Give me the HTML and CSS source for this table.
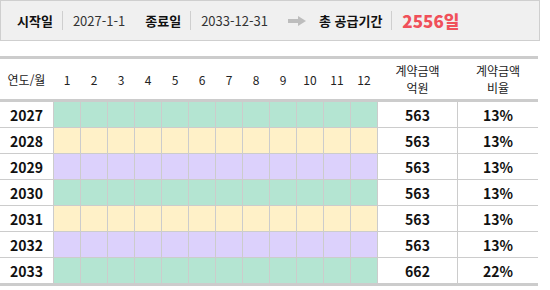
FILE: index.html
```html
<!DOCTYPE html>
<html lang="ko">
<head>
<meta charset="utf-8">
<link rel="stylesheet" href="styles.css">
</head>
<body>
<div class="summary">
  <span class="label">시작일</span><span class="sep"></span><span class="value">2027-1-1</span>
  <span class="label gap">종료일</span><span class="sep"></span><span class="value">2033-12-31</span>
  <svg class="arrow" width="18" height="10" viewBox="0 0 18 10"><rect x="0" y="3" width="11" height="4" fill="#bdbdbd"/><polygon points="10,0 18,5 10,10" fill="#bdbdbd"/></svg>
  <span class="label">총 공급기간</span><span class="sep"></span><span class="total">2556일</span>
</div>
<div class="table">
  <div class="thead">
    <div class="th">연도/월</div>
    <div class="th">1</div><div class="th">2</div><div class="th">3</div><div class="th">4</div>
    <div class="th">5</div><div class="th">6</div><div class="th">7</div><div class="th">8</div>
    <div class="th">9</div><div class="th">10</div><div class="th">11</div><div class="th">12</div>
    <div class="th two">계약금액<br>억원</div>
    <div class="th two">계약금액<br>비율</div>
  </div>
  <div class="tbody">
    <div class="td">2027</div>
    <div class="m g"></div><div class="m g"></div><div class="m g"></div><div class="m g"></div><div class="m g"></div><div class="m g"></div><div class="m g"></div><div class="m g"></div><div class="m g"></div><div class="m g"></div><div class="m g"></div><div class="m g"></div>
    <div class="td">563</div><div class="td">13%</div>

    <div class="td">2028</div>
    <div class="m y"></div><div class="m y"></div><div class="m y"></div><div class="m y"></div><div class="m y"></div><div class="m y"></div><div class="m y"></div><div class="m y"></div><div class="m y"></div><div class="m y"></div><div class="m y"></div><div class="m y"></div>
    <div class="td">563</div><div class="td">13%</div>

    <div class="td">2029</div>
    <div class="m p"></div><div class="m p"></div><div class="m p"></div><div class="m p"></div><div class="m p"></div><div class="m p"></div><div class="m p"></div><div class="m p"></div><div class="m p"></div><div class="m p"></div><div class="m p"></div><div class="m p"></div>
    <div class="td">563</div><div class="td">13%</div>

    <div class="td">2030</div>
    <div class="m g"></div><div class="m g"></div><div class="m g"></div><div class="m g"></div><div class="m g"></div><div class="m g"></div><div class="m g"></div><div class="m g"></div><div class="m g"></div><div class="m g"></div><div class="m g"></div><div class="m g"></div>
    <div class="td">563</div><div class="td">13%</div>

    <div class="td">2031</div>
    <div class="m y"></div><div class="m y"></div><div class="m y"></div><div class="m y"></div><div class="m y"></div><div class="m y"></div><div class="m y"></div><div class="m y"></div><div class="m y"></div><div class="m y"></div><div class="m y"></div><div class="m y"></div>
    <div class="td">563</div><div class="td">13%</div>

    <div class="td">2032</div>
    <div class="m p"></div><div class="m p"></div><div class="m p"></div><div class="m p"></div><div class="m p"></div><div class="m p"></div><div class="m p"></div><div class="m p"></div><div class="m p"></div><div class="m p"></div><div class="m p"></div><div class="m p"></div>
    <div class="td">563</div><div class="td">13%</div>

    <div class="td">2033</div>
    <div class="m g"></div><div class="m g"></div><div class="m g"></div><div class="m g"></div><div class="m g"></div><div class="m g"></div><div class="m g"></div><div class="m g"></div><div class="m g"></div><div class="m g"></div><div class="m g"></div><div class="m g"></div>
    <div class="td">662</div><div class="td">22%</div>
  </div>
</div>
</body>
</html>
```

FILE: styles.css
```css
* { box-sizing: border-box; }
body {
  margin: 0;
  background: #fff;
  font-family: "Noto Sans CJK KR", "Noto Sans", sans-serif;
  color: #111;
}
.summary {
  width: 540px;
  height: 41px;
  border: 1px solid #cfcfcf;
  background: #f0f0f0;
  display: flex;
  align-items: center;
  padding-left: 16px;
  font-size: 13px;
}
.label { font-weight: bold; color: #111; }
.label.gap { margin-left: 20px; }
.sep {
  width: 1px;
  height: 19px;
  background: #cfcfcf;
  margin: 0 10px 0 9px;
}
.value { color: #333; }
.arrow { margin: 0 13px 0 20px; }
.total { color: #f0505a; font-weight: 900; font-size: 17px; }

.table {
  width: 538px;
  margin-top: 15px;
  border-top: 3px solid #cccccc;
  border-bottom: 3px solid #cccccc;
}
.thead, .tbody {
  display: grid;
  grid-template-columns: 53px repeat(12, 26px) 79px 80px;
  column-gap: 1px;
}
.thead {
  height: 43px;
  border-bottom: 3px solid #cccccc;
}
.th {
  display: flex;
  align-items: center;
  justify-content: center;
  text-align: center;
  font-size: 12px;
  color: #222;
}
.th.two { line-height: 17px; }
.tbody {
  row-gap: 1px;
  background: #cccccc;
  grid-auto-rows: 25px;
}
.td {
  background: #fff;
  display: flex;
  align-items: center;
  justify-content: center;
  font-weight: bold;
  font-size: 14px;
  color: #111;
}
.m.g { background: #b4e5d2; }
.m.y { background: #fff1c8; }
.m.p { background: #dcd1fc; }
```
